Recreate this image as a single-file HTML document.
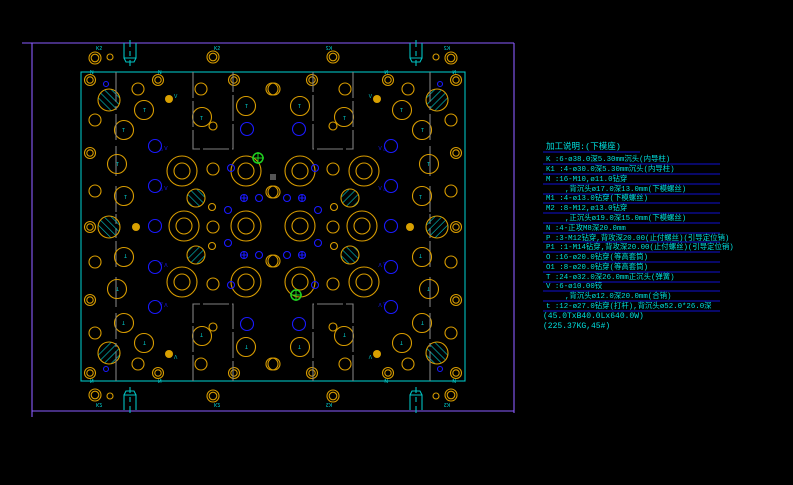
<!DOCTYPE html>
<html><head><meta charset="utf-8"><style>
html,body{margin:0;padding:0;background:#000;width:793px;height:485px;overflow:hidden}
svg{display:block}
.o{fill:none;stroke:#d89c00;stroke-width:1.1}
.b{fill:none;stroke:#1a1aff;stroke-width:1.1}
.c{fill:none;stroke:#00c0c0;stroke-width:1.1}
.g{fill:none;stroke:#808080;stroke-width:1.1}
.t{font-family:"Liberation Mono","WenQuanYi Zen Hei",monospace;fill:#00e0e0;font-size:7.4px}
.s{font-family:"Liberation Sans",sans-serif;fill:#00dede;font-size:5px}
</style></head><body>
<svg width="793" height="485" viewBox="0 0 793 485">
<defs>
<pattern id="h" width="5" height="5" patternUnits="userSpaceOnUse" patternTransform="rotate(-45)"><line x1="0" y1="0" x2="0" y2="5" stroke="#00c0c0" stroke-width="1.3"/></pattern>
<g id="q">
  <path class="c" d="M124 43 V58 H136 V43 M124 58 L126 62 H134 L136 58 M130 40 V47 M130 51 V56 M130 60 V66"/>
  <circle class="o" cx="95" cy="58" r="6"/><circle class="o" cx="95" cy="58" r="3.8"/>
  <circle class="o" cx="110" cy="57" r="3"/>
  <circle class="o" cx="213" cy="57" r="6"/><circle class="o" cx="213" cy="57" r="3.8"/>
  <circle class="o" cx="90" cy="80" r="5.5"/><circle class="o" cx="90" cy="80" r="3.2"/>
  <circle class="o" cx="158" cy="80" r="5.5"/><circle class="o" cx="158" cy="80" r="3.2"/>
  <circle class="o" cx="234" cy="80" r="5.5"/><circle class="o" cx="234" cy="80" r="3.2"/>
  <circle cx="109" cy="100" r="11" fill="url(#h)" stroke="#d89c00" stroke-width="1.1"/>
  <circle class="o" cx="138" cy="89" r="6"/>
  <circle class="o" cx="201" cy="89" r="6"/>
  <circle class="o" cx="272" cy="89" r="6"/>
  <circle cx="169" cy="99" r="4" fill="#d8a000"/>
  <circle class="o" cx="144" cy="110" r="9.5"/>
  <circle class="o" cx="95" cy="120" r="6"/>
  <circle class="o" cx="124" cy="130" r="9.5"/>
  <circle class="o" cx="202" cy="117" r="9.5"/>
  <circle class="o" cx="213" cy="126" r="4"/>
  <circle class="o" cx="246" cy="106" r="9.5"/>
  <path class="g" d="M116 72 V110 M116 114 V140 M116 146 V180 M116 186 V212" stroke-dasharray="30 4"/>
  <path class="g" d="M193 72 V149 H233 V72" stroke-dasharray="26 3"/>
  <circle class="b" cx="155" cy="146" r="6.5"/>
  <circle class="b" cx="155" cy="186" r="6.5"/>
  <circle class="b" cx="247" cy="129" r="6.5"/>
  <circle class="b" cx="106" cy="84" r="2.5"/>
  <circle class="o" cx="90" cy="153" r="5.5"/><circle class="o" cx="90" cy="153" r="3.2"/>
  <circle class="o" cx="117" cy="164" r="9.5"/>
  <circle class="o" cx="182" cy="171" r="15"/><circle class="o" cx="182" cy="171" r="8"/>
  <circle class="o" cx="213" cy="169" r="6"/>
  <circle class="o" cx="246" cy="171" r="15"/><circle class="o" cx="246" cy="171" r="8"/>
  <circle class="b" cx="231" cy="168" r="3.5"/>
  <circle class="o" cx="95" cy="191" r="6"/>
  <circle class="o" cx="124" cy="196" r="9.5"/>
  <circle cx="196" cy="198" r="9" fill="url(#h)" stroke="#d89c00" stroke-width="1.1"/>
  <circle class="o" cx="212" cy="207" r="3.5"/>
  <circle class="b" cx="228" cy="210" r="3.5"/>
  <circle class="b" cx="244" cy="198" r="3.5"/><path class="b" d="M240 198 H248 M244 194 V202"/>
  <circle class="b" cx="259" cy="198" r="3.5"/>
  <circle class="o" cx="272" cy="192" r="6"/>
  <text class="s" x="96" y="50">K2</text><text class="s" x="214" y="50">K2</text>
  <text class="s" x="90" y="74">N</text><text class="s" x="158" y="74">N</text>
  <text class="s" x="143" y="112">T</text><text class="s" x="122" y="132">T</text>
  <text class="s" x="116" y="166">T</text><text class="s" x="124" y="199">T</text>
  <text class="s" x="200" y="120">T</text><text class="s" x="245" y="108">T</text>
  <text class="s" x="174" y="98" style="fill:#00c8c8">V</text>
  <text class="s" x="159" y="150" style="fill:#1a1aff">△ V</text>
  <text class="s" x="159" y="190" style="fill:#1a1aff">△ V</text>
</g>
<g id="r">
  <path class="g" d="M116 214 V240" stroke-dasharray="10 4"/>
  <circle class="o" cx="90" cy="227" r="5.5"/><circle class="o" cx="90" cy="227" r="3.2"/>
  <circle cx="109" cy="227" r="11" fill="url(#h)" stroke="#d89c00" stroke-width="1.1"/>
  <circle cx="136" cy="227" r="4" fill="#d8a000"/>
  <circle class="b" cx="155" cy="226" r="6.5"/>
  <circle class="o" cx="184" cy="226" r="15"/><circle class="o" cx="184" cy="226" r="8"/>
  <circle class="o" cx="213" cy="227" r="6"/>
  <circle class="o" cx="246" cy="226" r="15"/><circle class="o" cx="246" cy="226" r="8"/>
</g>
</defs>
<path d="M32 43 H514 M32 43 V413 M514 43 V413 M32 411 H514 M22 43 H40 M32 405 V417" stroke="#8a5cff" stroke-width="1.1" fill="none"/>
<rect x="81" y="72" width="384" height="309" class="c"/>
<use href="#q"/>
<use href="#q" transform="translate(546,0) scale(-1,1)"/>
<use href="#q" transform="translate(0,453) scale(1,-1)"/>
<use href="#q" transform="translate(546,453) scale(-1,-1)"/>
<use href="#r"/>
<use href="#r" transform="translate(546,0) scale(-1,1)"/>
<circle cx="258" cy="158" r="5" fill="none" stroke="#20d020" stroke-width="1.5"/><path d="M252 158 H264 M258 152 V164" stroke="#20d020"/>
<circle cx="296" cy="295" r="5" fill="none" stroke="#20d020" stroke-width="1.5"/><path d="M290 295 H302 M296 289 V301" stroke="#20d020"/>
<rect x="270" y="174" width="6" height="6" fill="#555"/>
<g stroke="#1010d0" stroke-width="1">
<path d="M543 152 H640 M543 164 H720 M543 174 H720 M543 184 H720 M543 194 H720 M543 203 H720 M543 213 H720 M543 223 H720 M543 233 H720 M543 242 H720 M543 252 H720 M543 262 H720 M543 272 H720 M543 282 H720 M543 291 H720 M543 301 H720 M543 311 H720"/>
</g>
<g class="t">
<text x="546" y="149" style="font-size:8.5px">加工说明:(下模座)</text>
<text x="546" y="161">K   :6-ø38.0深5.30mm沉头(内导柱)</text>
<text x="546" y="171">K1   :4-ø30.0深5.30mm沉头(内导柱)</text>
<text x="546" y="181">M   :16-M10,ø11.0钻穿</text>
<text x="565" y="191">,背沉头ø17.0深13.0mm(下模螺丝)</text>
<text x="546" y="200">M1  :4-ø13.0钻穿(下模螺丝)</text>
<text x="546" y="210">M2  :8-M12,ø13.0钻穿</text>
<text x="565" y="220">,正沉头ø19.0深15.0mm(下模螺丝)</text>
<text x="546" y="230">N   :4-正攻M8深20.0mm</text>
<text x="546" y="240">P   :3-M12钻穿,背攻深20.00(止付螺丝)(引导定位销)</text>
<text x="546" y="249">P1  :1-M14钻穿,背攻深20.00(止付螺丝)(引导定位销)</text>
<text x="546" y="259">O   :16-ø20.0钻穿(等高套筒)</text>
<text x="546" y="269">O1  :8-ø20.0钻穿(等高套筒)</text>
<text x="546" y="279">T   :24-ø32.0深26.0mm正沉头(弹簧)</text>
<text x="546" y="288">V    :6-ø10.00铰</text>
<text x="565" y="298">,背沉头ø12.0深20.0mm(合销)</text>
<text x="546" y="308">t   :12-ø27.0钻穿(打杆),背沉头ø52.0*26.0深</text>
<text x="543" y="318" style="font-size:8px">(45.0TxB40.0Lx640.0W)</text>
<text x="543" y="328" style="font-size:8px">(225.37KG,45#)</text>
</g>
</svg>
</body></html>
